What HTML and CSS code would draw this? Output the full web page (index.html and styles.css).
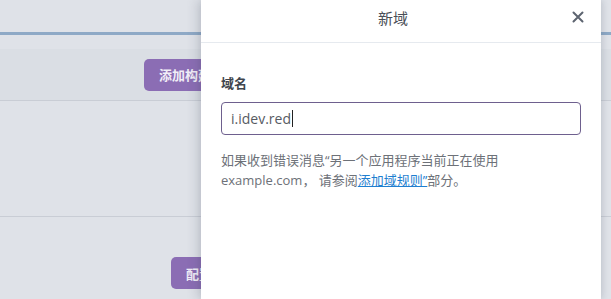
FILE: index.html
```html
<!DOCTYPE html>
<html lang="zh-CN">
<head>
    <meta charset="UTF-8">
    <meta name="viewport" content="width=device-width, initial-scale=1.0">
    <title>新域</title>
    <link rel="stylesheet" href="styles.css">
</head>
<body>

    <div class="page">
        <div class="topbar"></div>
        <div class="toolbar">
            <button class="btn">添加构建包</button>
        </div>
        <div class="section"></div>
        <div class="section last">
            <button class="btn small">配置</button>
        </div>
    </div>

    <div class="drawer">
        <div class="drawer-head">
            <span class="drawer-title">新域</span>
            <span class="close">
                <svg width="12" height="12" viewBox="0 0 12 12">
                    <path d="M1.5 1.5 L10.5 10.5 M10.5 1.5 L1.5 10.5" stroke="#5d6470" stroke-width="2" stroke-linecap="round"/>
                </svg>
            </span>
        </div>
        <div class="drawer-body">
            <label class="field-label">域名</label>
            <div class="input">i.idev.red<span class="caret"></span></div>
            <p class="help">如果收到错误消息“另一个应用程序当前正在使用 example.com， 请参阅<a href="#">添加域规则”</a>部分。</p>
        </div>
    </div>

</body>
</html>
```

FILE: styles.css
```css
* {
    margin: 0;
    padding: 0;
    box-sizing: border-box;
    font-family: 'Open Sans', 'Noto Sans CJK SC', sans-serif;
}

body {
    width: 611px;
    height: 299px;
    overflow: hidden;
    background: #dfe2e8;
    position: relative;
}

.page {
    display: flex;
    flex-direction: column;
}

.topbar {
    height: 35px;
    border-bottom: 3px solid #8ea9c6;
    margin-bottom: 14px;
}

.toolbar {
    height: 52px;
    background: #dadee4;
    border-bottom: 1px solid #c9cdd5;
    display: flex;
    align-items: center;
    padding-left: 144px;
}

.section {
    height: 116px;
    border-bottom: 1px solid #c9cdd5;
}

.section.last {
    height: auto;
    border-bottom: none;
    padding: 40px 0 0 171px;
}

.btn {
    background: #8b6db4;
    color: #f1eef7;
    border: none;
    border-radius: 5px;
    height: 32px;
    padding: 0 15px;
    font-size: 13px;
    font-weight: 600;
    white-space: nowrap;
}

.drawer {
    position: absolute;
    top: 0;
    left: 201px;
    width: 400px;
    height: 299px;
    background: #fff;
    box-shadow: -4px 0 10px rgba(60, 70, 90, 0.18), 2px 0 6px rgba(60, 70, 90, 0.12);
}

.drawer-head {
    height: 43px;
    border-bottom: 1px solid #e6eaef;
    display: flex;
    align-items: center;
    justify-content: center;
    position: relative;
}

.drawer-title {
    font-size: 15px;
    color: #4a4f57;
    margin-left: -16px;
    margin-top: -8px;
}

.close {
    position: absolute;
    right: 17px;
    top: 11px;
    display: flex;
}

.drawer-body {
    padding: 31px 20px 0 20px;
    display: flex;
    flex-direction: column;
}

.field-label {
    font-size: 13px;
    font-weight: 600;
    color: #40454d;
    margin-bottom: 10px;
    line-height: 18px;
}

.input {
    height: 33px;
    border: 1px solid #6e608e;
    border-radius: 4px;
    display: flex;
    align-items: center;
    padding-left: 9px;
    font-size: 14px;
    color: #575b63;
}

.caret {
    display: inline-block;
    width: 1px;
    height: 17px;
    background: #222;
    margin-left: 1px;
}

.help {
    margin-top: 15px;
    font-size: 13px;
    line-height: 20px;
    color: #6d7178;
    width: 295px;
}

.help a {
    color: #1f7fd0;
}
```
